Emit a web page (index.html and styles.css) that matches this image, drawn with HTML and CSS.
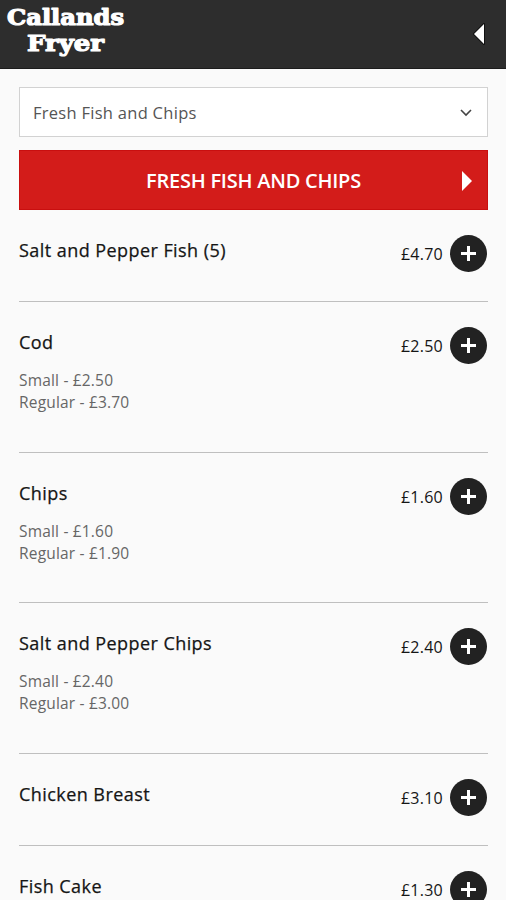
FILE: index.html
```html
<!DOCTYPE html>
<html lang="en">
<head>
<meta charset="utf-8">
<title>Callands Fryer</title>
<link rel="stylesheet" href="styles.css">
</head>
<body>
<header class="topbar">
  <h1 class="brand"><svg width="122" height="54" viewBox="0 0 122 54"><text x="1" y="21" textLength="117" lengthAdjust="spacingAndGlyphs">Callands</text><text x="21" y="46.5" textLength="77" lengthAdjust="spacingAndGlyphs">Fryer</text></svg></h1>
  <svg class="back" width="14" height="24" viewBox="0 0 14 24"><path d="M12 2v20L2 12z"/></svg>
</header>
<main class="menu">
  <div class="select"><span>Fresh Fish and Chips</span><svg width="12" height="8" viewBox="0 0 12 8"><path d="M1 1l5 5 5-5"/></svg></div>
  <div class="category"><span>FRESH FISH AND CHIPS</span><svg width="10" height="20" viewBox="0 0 10 20"><path d="M0 0l10 10L0 20z"/></svg></div>
  <ul class="items">
    <li class="item"><div class="info"><h2>Salt and Pepper Fish (5)</h2></div><span class="price">£4.70</span><button class="add" aria-label="Add"></button></li>
    <li class="item tall"><div class="info"><h2>Cod</h2><p>Small - £2.50</p><p>Regular - £3.70</p></div><span class="price">£2.50</span><button class="add" aria-label="Add"></button></li>
    <li class="item tall"><div class="info"><h2>Chips</h2><p>Small - £1.60</p><p>Regular - £1.90</p></div><span class="price">£1.60</span><button class="add" aria-label="Add"></button></li>
    <li class="item tall"><div class="info"><h2>Salt and Pepper Chips</h2><p>Small - £2.40</p><p>Regular - £3.00</p></div><span class="price">£2.40</span><button class="add" aria-label="Add"></button></li>
    <li class="item"><div class="info"><h2>Chicken Breast</h2></div><span class="price">£3.10</span><button class="add" aria-label="Add"></button></li>
    <li class="item"><div class="info"><h2>Fish Cake</h2></div><span class="price">£1.30</span><button class="add" aria-label="Add"></button></li>
  </ul>
</main>
</body>
</html>
```
FILE: styles.css
```css
* { box-sizing: border-box; margin: 0; padding: 0; }
html, body { height: 900px; overflow: hidden; }
body { background: #fafafa; font-family: "Open Sans", sans-serif; color: #151515; }
.topbar { height: 69px; background: #2d2d2d; border-bottom: 1px solid #1c1c1c; display: flex; justify-content: space-between; align-items: center; padding: 0 20px 0 6px; }
.brand { height: 65px; line-height: 0; padding-top: 2px; }
.brand text { font: 900 22px "DejaVu Serif", serif; fill: #fff; stroke: #fff; stroke-width: 1.2px; stroke-linejoin: round; }
.back { fill: #fff; stroke: #111; stroke-width: 2; stroke-linejoin: round; paint-order: stroke; }
.menu { padding: 18px 18px 0 19px; }
.select { height: 50px; border: 1px solid #d2d2d2; background: #fff; display: flex; justify-content: space-between; align-items: center; padding: 1px 15px 0 13px; font-size: 16.5px; line-height: 22px; letter-spacing: .28px; color: #555; }
.select path { fill: none; stroke: #444; stroke-width: 1.6; }
.category { height: 60px; margin-top: 13px; background: #d31c1a; border: 1px solid #c90f0f; color: #fff; font-size: 20px; font-weight: 600; letter-spacing: -.24px; display: grid; grid-template-columns: 1fr 10px; align-items: center; text-align: center; padding: 1px 15px 0 25px; }
.category svg { fill: #fff; }
.items { list-style: none; }
.item { height: 92px; display: flex; align-items: flex-start; border-bottom: 1px solid #bfbfbf; padding-top: 25px; }
.item.tall { height: 150.5px; }
.info { flex: 1; }
.info h2 { font-size: 18px; font-weight: 500; letter-spacing: .44px; line-height: 30px; margin-bottom: 12px; -webkit-text-stroke: .25px #151515; }
.info p { font-size: 15.5px; letter-spacing: .18px; line-height: 22px; color: #666; }
.price { font-size: 16px; letter-spacing: .25px; line-height: 38px; margin-right: 7px; }
.add { width: 37px; height: 37px; border: 0; border-radius: 50%; margin-right: 1px; background: linear-gradient(#fff, #fff) center / 15px 3px no-repeat, linear-gradient(#fff, #fff) center / 3px 15px no-repeat, #222; }
```
